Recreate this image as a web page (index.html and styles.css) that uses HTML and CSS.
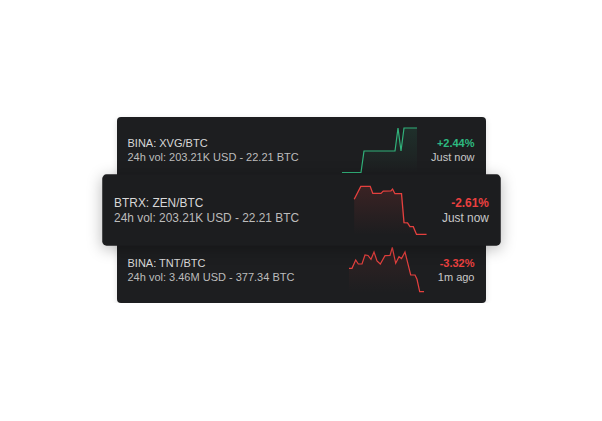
FILE: index.html
```html
<!DOCTYPE html>
<html>
<head>
<meta charset="utf-8">
<link rel="stylesheet" href="styles.css">
</head>
<body>
<div class="stack">
  <div class="card">
    <div class="info">
      <div class="pair">BINA: XVG/BTC</div>
      <div class="vol">24h vol: 203.21K USD - 22.21 BTC</div>
    </div>
    <svg class="chart" width="75" height="46" viewBox="0 0 75 46">
      <defs>
        <linearGradient id="g1" x1="0" y1="0" x2="0" y2="1">
          <stop offset="0" stop-color="#2fb37a" stop-opacity="0.12"/>
          <stop offset="1" stop-color="#2fb37a" stop-opacity="0"/>
        </linearGradient>
      </defs>
      <polygon fill="url(#g1)" points="0,46 19,46 22,24 53,24 56,1 59,24 62,1 75,1 75,46"/>
      <polyline class="line-up" points="0,45.5 19,45.5 22,24 53,24 56,1 59,24 62,1 75,1"/>
    </svg>
    <div class="meta">
      <div class="pct up">+2.44%</div>
      <div class="time">Just now</div>
    </div>
  </div>

  <div class="card card-front">
    <div class="info">
      <div class="pair">BTRX: ZEN/BTC</div>
      <div class="vol">24h vol: 203.21K USD - 22.21 BTC</div>
    </div>
    <svg class="chart" width="75" height="46" viewBox="0 0 75 46">
      <defs>
        <linearGradient id="g2" x1="0" y1="0" x2="0" y2="1">
          <stop offset="0" stop-color="#e8433f" stop-opacity="0.15"/>
          <stop offset="1" stop-color="#e8433f" stop-opacity="0"/>
        </linearGradient>
      </defs>
      <polygon fill="url(#g2)" points="7.3,13.1 13.4,1.1 22.1,1.1 24.5,7.6 32.1,7.6 34.2,5.5 41.3,5.3 42.8,3.6 45,7.9 51.1,7.9 53.4,34.7 56.7,35 58.9,38.4 62,38.4 65,45.6 74.3,45.6 74.3,46 7.3,46"/>
      <polyline class="line-down" points="7.3,13.1 13.4,1.1 22.1,1.1 24.5,7.6 32.1,7.6 34.2,5.5 41.3,5.3 42.8,3.6 45,7.9 51.1,7.9 53.4,34.7 56.7,35 58.9,38.4 62,38.4 65,45.6 74.3,45.6"/>
    </svg>
    <div class="meta">
      <div class="pct down">-2.61%</div>
      <div class="time">Just now</div>
    </div>
  </div>

  <div class="card">
    <div class="info">
      <div class="pair">BINA: TNT/BTC</div>
      <div class="vol">24h vol: 3.46M USD - 377.34 BTC</div>
    </div>
    <svg class="chart" width="75" height="46" viewBox="0 0 75 46">
      <defs>
        <linearGradient id="g3" x1="0" y1="0" x2="0" y2="1">
          <stop offset="0" stop-color="#e8433f" stop-opacity="0.10"/>
          <stop offset="1" stop-color="#e8433f" stop-opacity="0"/>
        </linearGradient>
      </defs>
      <polygon fill="url(#g3)" points="0,21.3 3,21.3 6.7,13 9.3,17 13,17 16,8 19,8.5 22,12.3 25,5 28,14 31.3,17 36,8.7 41,8.5 43.3,0.5 46.7,16.3 50,9.7 52.5,11.5 56,5 61.7,28 66,28 68,32.3 70.7,44.7 75,44.7 75,46 0,46"/>
      <polyline class="line-down" points="0,21.3 3,21.3 6.7,13 9.3,17 13,17 16,8 19,8.5 22,12.3 25,5 28,14 31.3,17 36,8.7 41,8.5 43.3,0.5 46.7,16.3 50,9.7 52.5,11.5 56,5 61.7,28 66,28 68,32.3 70.7,44.7 75,44.7"/>
    </svg>
    <div class="meta">
      <div class="pct down">-3.32%</div>
      <div class="time">1m ago</div>
    </div>
  </div>
</div>
</body>
</html>
```

FILE: styles.css
```css
html, body {
  margin: 0;
  padding: 0;
  background: #ffffff;
}

body {
  font-family: "Liberation Sans", Arial, sans-serif;
  -webkit-font-smoothing: antialiased;
}

.stack {
  padding-top: 117px;
  display: flex;
  flex-direction: column;
  align-items: center;
}

.card {
  box-sizing: border-box;
  width: 369px;
  height: 66px;
  padding: 10px 11px;
  background: #1d1e20;
  border-radius: 4px;
  display: flex;
  align-items: center;
  box-shadow: 0 2px 6px rgba(0, 0, 0, 0.12);
}

.card + .card {
  margin-top: -6px;
}

.card-front {
  position: relative;
  z-index: 1;
  transform: scale(1.08);
  background: #1c1d1f;
  box-shadow: 0 3px 14px rgba(0, 0, 0, 0.28);
}

.info {
  flex: 1;
  font-size: 11px;
  line-height: 14px;
  white-space: nowrap;
}

.pair {
  color: #d8d8d8;
}

.vol {
  color: #bcbcbc;
}

.chart {
  display: block;
  flex: none;
  overflow: visible;
}

.line-up,
.line-down {
  fill: none;
  stroke-width: 1.2;
  stroke-linejoin: miter;
}

.line-up {
  stroke: #31b27b;
}

.line-down {
  stroke: #e5403e;
}

.meta {
  margin-left: 14px;
  text-align: right;
  font-size: 11px;
  line-height: 14px;
  white-space: nowrap;
}

.pct {
  font-weight: 700;
}

.pct.up {
  color: #2dba80;
}

.pct.down {
  color: #ea403f;
}

.time {
  color: #c8c8c8;
}
```
